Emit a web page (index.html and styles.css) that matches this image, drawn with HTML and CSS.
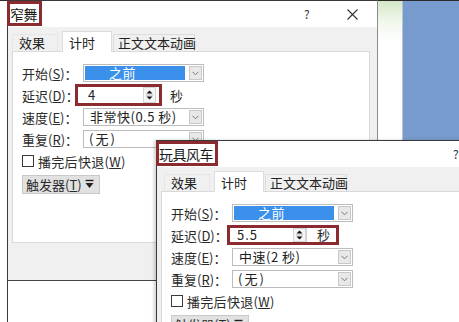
FILE: index.html
```html
<!DOCTYPE html>
<html lang="zh-CN">
<head>
<meta charset="utf-8">
<title>计时</title>
<link rel="stylesheet" href="styles.css">
</head>
<body>
<div class="backdrop">
  <div class="bd-left"></div>
  <div class="bd-mid"></div>
  <div class="bd-right"></div>
</div>

<div class="dialog d1">
  <div class="titlebar">
    <span class="title">窄舞</span>
    <div class="ctrls">
      <span class="help">?</span>
      <svg class="close" width="11" height="11" viewBox="0 0 11 11"><path d="M0.5 0.5L10.5 10.5M10.5 0.5L0.5 10.5" stroke="#333" stroke-width="1.1" fill="none"/></svg>
    </div>
  </div>
  <div class="tabs">
    <span class="tab t1">效果</span>
    <span class="tab t2 active">计时</span>
    <span class="tab t3">正文文本动画</span>
  </div>
  <div class="panel">
    <div class="row">
      <span class="label">开始(<u>S</u>)：</span>
      <span class="combo"><span class="field sel">之前</span><span class="drop"><svg width="7" height="5" viewBox="0 0 7 5"><path d="M0.5 0.8L3.5 3.8L6.5 0.8" stroke="#777" fill="none"/></svg></span></span>
    </div>
    <div class="row">
      <span class="label">延迟(<u>D</u>)：</span>
      <span class="ctl">
        <span class="hl hl1">
          <span class="spin-input">4</span>
          <span class="spin"><svg width="11" height="14" viewBox="0 0 11 14"><path d="M5.5 2.5L8.5 5.5H2.5Z" fill="#111"/><path d="M2 7H9" stroke="#bbb"/><path d="M5.5 11.5L8.5 8.5H2.5Z" fill="#111"/></svg></span>
        </span>
        <span class="unit-out">秒</span>
      </span>
    </div>
    <div class="row">
      <span class="label">速度(<u>E</u>)：</span>
      <span class="combo"><span class="field">非常快(0.5 秒)</span><span class="drop"><svg width="7" height="5" viewBox="0 0 7 5"><path d="M0.5 0.8L3.5 3.8L6.5 0.8" stroke="#777" fill="none"/></svg></span></span>
    </div>
    <div class="row">
      <span class="label">重复(<u>R</u>)：</span>
      <span class="combo"><span class="field wide">(无)</span><span class="drop"><svg width="7" height="5" viewBox="0 0 7 5"><path d="M0.5 0.8L3.5 3.8L6.5 0.8" stroke="#777" fill="none"/></svg></span></span>
    </div>
    <div class="row plain">
      <span class="check"></span>
      <span>播完后快退(<u>W</u>)</span>
    </div>
    <div class="trigger">
      <span>触发器(<u>T</u>)</span>
      <svg width="9" height="11" viewBox="0 0 9 11"><path d="M0.5 1.5H8.5" stroke="#222" stroke-width="1.4"/><path d="M0.5 4H8.5L4.5 9Z" fill="#222"/></svg>
    </div>
  </div>
  <div class="foot"></div>
  <div class="below"></div>
</div>

<div class="dialog d2">
  <div class="titlebar">
    <span class="title">玩具风车</span>
    <div class="ctrls">
      <span class="help">?</span>
      <svg class="close" width="11" height="11" viewBox="0 0 11 11"><path d="M0.5 0.5L10.5 10.5M10.5 0.5L0.5 10.5" stroke="#333" stroke-width="1.1" fill="none"/></svg>
    </div>
  </div>
  <div class="tabs">
    <span class="tab t1">效果</span>
    <span class="tab t2 active">计时</span>
    <span class="tab t3">正文文本动画</span>
  </div>
  <div class="panel">
    <div class="row">
      <span class="label">开始(<u>S</u>)：</span>
      <span class="combo"><span class="field sel">之前</span><span class="drop"><svg width="7" height="5" viewBox="0 0 7 5"><path d="M0.5 0.8L3.5 3.8L6.5 0.8" stroke="#777" fill="none"/></svg></span></span>
    </div>
    <div class="row">
      <span class="label">延迟(<u>D</u>)：</span>
      <span class="ctl">
        <span class="hl hl2">
          <span class="spin-input">5.5</span>
          <span class="spin"><svg width="11" height="14" viewBox="0 0 11 14"><path d="M5.5 2.5L8.5 5.5H2.5Z" fill="#111"/><path d="M2 7H9" stroke="#bbb"/><path d="M5.5 11.5L8.5 8.5H2.5Z" fill="#111"/></svg></span>
          <span class="unit-in">秒</span>
        </span>
      </span>
    </div>
    <div class="row">
      <span class="label">速度(<u>E</u>)：</span>
      <span class="combo"><span class="field">中速(2 秒)</span><span class="drop"><svg width="7" height="5" viewBox="0 0 7 5"><path d="M0.5 0.8L3.5 3.8L6.5 0.8" stroke="#777" fill="none"/></svg></span></span>
    </div>
    <div class="row">
      <span class="label">重复(<u>R</u>)：</span>
      <span class="combo"><span class="field wide">(无)</span><span class="drop"><svg width="7" height="5" viewBox="0 0 7 5"><path d="M0.5 0.8L3.5 3.8L6.5 0.8" stroke="#777" fill="none"/></svg></span></span>
    </div>
    <div class="row plain">
      <span class="check"></span>
      <span>播完后快退(<u>W</u>)</span>
    </div>
    <div class="trigger">
      <span>触发器(<u>T</u>)</span>
      <svg width="9" height="11" viewBox="0 0 9 11"><path d="M0.5 1.5H8.5" stroke="#222" stroke-width="1.4"/><path d="M0.5 4H8.5L4.5 9Z" fill="#222"/></svg>
    </div>
  </div>
</div>
</body>
</html>
```
FILE: styles.css
```css
* { box-sizing: border-box; margin: 0; padding: 0; }
html, body { width: 459px; height: 322px; overflow: hidden; }
body {
  position: relative;
  background: #fff;
  font-family: "Noto Sans CJK SC", "Noto Sans", sans-serif;
  font-size: 13px;
  color: #2a2a2a;
}
u { text-decoration: underline; text-underline-offset: 1px; }

.backdrop {
  display: flex;
  height: 322px;
  border-top: 1px solid #2a2a2a;
}
.bd-left { width: 378px; background: #fff; }
.bd-mid {
  width: 25px;
  background: linear-gradient(#d3e6c6 0, #eef6e8 18px, #fff 40px);
  border-right: 1px solid #b8c4d6;
}
.bd-right { flex: 1; background: #789bcd; }

.dialog {
  position: absolute;
  width: 371px;
  background: #f0f0f0;
  border: 1px solid #3a3a3a;
  display: flex;
  flex-direction: column;
}
.d1 { left: 7px; top: 0; height: 340px; border-right-color: #8c8c8c; }
.d2 { left: 156px; top: 140px; height: 200px; box-shadow: -2px 0 3px rgba(0,0,0,0.18); }

.titlebar {
  height: 26px;
  background: #fff;
  display: flex;
  align-items: flex-start;
  flex: none;
}
.title {
  height: 25px;
  margin-left: -1px;
  border: 3px solid #8b2b2f;
  padding: 0 2px 0 0;
  display: flex;
  align-items: center;
  font-size: 14px;
  color: #1a1a1a;
  letter-spacing: -0.5px;
}
.ctrls {
  margin-left: auto;
  height: 26px;
  display: flex;
  align-items: center;
  gap: 36px;
  padding-right: 19px;
}
.help { font-size: 12px; color: #333; width: 7px; line-height: 12px; }

.tabs {
  height: 24px;
  flex: none;
  display: flex;
  align-items: flex-end;
  padding-left: 4px;
}
.d2 .tabs { padding-left: 7px; }
.tab {
  height: 17px;
  padding-top: 0;
  line-height: 16px;
  border: 1px solid #dcdcdc;
  border-bottom: none;
  background: #f0f0f0;
  color: #222;
  white-space: nowrap;
}
.t1 { width: 46px; padding-left: 6px; margin-right: 4px; border-color: #e6e6e6; }
.t2 { width: 50px; padding-left: 6px; margin-right: 1px; }
.t3 { width: 82px; padding-left: 4px; }
.tab.active {
  height: 21px;
  margin-bottom: -1px;
  padding-top: 3px;
  background: #fff;
  position: relative;
}

.panel {
  margin: 0 7px 0 4px;
  height: 192px;
  flex: none;
  background: #fff;
  border: 1px solid #d9d9d9;
  padding: 10px 0 0 9px;
}
.d2 .panel { flex: 1; height: auto; }

.row {
  display: grid;
  grid-template-columns: 61px auto;
  align-items: center;
  height: 22px;
}
.row.plain { display: flex; gap: 4px; letter-spacing: 0.3px; }
.label { white-space: nowrap; color: #2a2a2a; }

.combo {
  width: 121px;
  height: 18px;
  display: flex;
  gap: 4px;
  padding: 1px;
  border: 1px solid #bcbcbc;
  background: #fff;
}
.field {
  flex: 1;
  padding-left: 5px;
  line-height: 14px;
  white-space: nowrap;
  color: #222;
  letter-spacing: 0.5px;
}
.field.wide { letter-spacing: 2px; padding-left: 4px; }
.field.sel { background: #3a90ea; color: #fff; padding-left: 24px; }
.drop {
  width: 13px;
  border: 1px solid #c8c8c8;
  background: #e8e8e8;
  display: flex;
  align-items: center;
  justify-content: center;
}

.ctl { display: flex; align-items: center; }
.hl {
  display: flex;
  align-items: stretch;
  border: 3px solid #8b2b2f;
  background: #fff;
}
.hl1 { width: 87px; height: 22px; margin-left: -8px; padding-right: 3px; }
.hl2 { width: 112px; height: 20px; margin-left: -5px; }
.spin-input { flex: 1; padding-left: 10px; line-height: 15px; color: #222; }
.hl2 .spin-input { padding-left: 7px; line-height: 14px; letter-spacing: 1px; }
.spin {
  width: 13px;
  display: flex;
  align-items: center;
  justify-content: center;
  border: 1px solid #d6d6d6;
  background: #f6f6f6;
}
.unit-out { margin-left: 8px; }
.unit-in {
  width: 30px;
  padding-left: 10px;
  line-height: 14px;
  border-left: 1px solid #d0d0d0;
}

.check {
  width: 12px;
  height: 12px;
  border: 1px solid #3a3a3a;
  background: #fff;
}

.trigger {
  margin-top: 3px;
  width: 78px;
  height: 19px;
  display: flex;
  align-items: center;
  gap: 3px;
  padding-left: 3px;
  background: #e1e1e1;
  border: 1px solid #c9c9c9;
  line-height: 16px;
}

.foot { height: 37px; flex: none; }
.below { flex: 1; background: #fff; border-top: 1px solid #444; }
```
